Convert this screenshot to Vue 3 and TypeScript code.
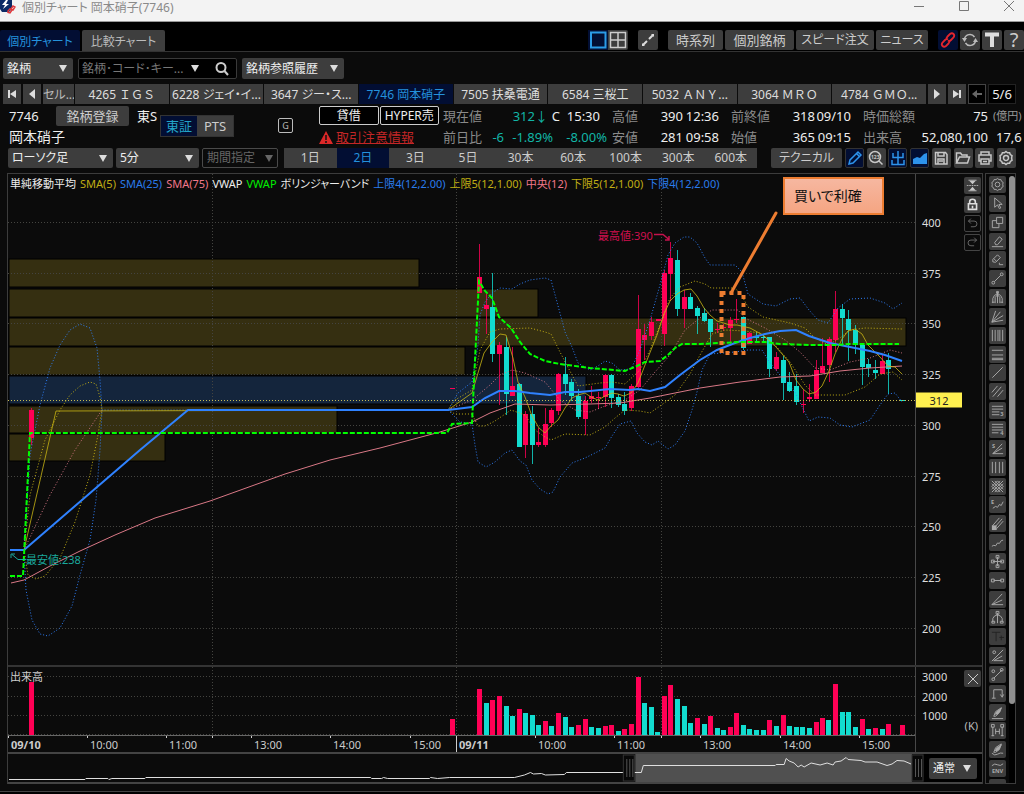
<script setup lang="ts">
import { ref } from 'vue'

type Candle = [x: number, high: number, top: number, bottom: number, low: number, up: number]
type Bar = [x: number, top: number, up: number]
interface Tool { name: string; d: string; fill?: string; text?: string; tx?: number; ty?: number; off?: boolean }

const plot = { x: 8, y: 174, w: 907, h: 491 }
const pctX = (x: number) => `${((x - plot.x) / plot.w) * 100}%`
const pctY = (y: number) => `${((y - plot.y) / plot.h) * 100}%`
const priceY = (p: number) => 222 + (400 - p) * 2.028
const volumeY = (v: number) => 735 - v * 0.0192
const volPct = (v: number) => `${((volumeY(v) - 667) / 68) * 100}%`

const watch = ['4265 ＩＧＳ', '6228 ジェイ・イ...', '3647 ジー・ス...', '7746 岡本硝子', '7505 扶桑電通', '6584 三桜工', '5032 ＡＮＹ...', '3064 ＭＲＯ', '4784 ＧＭＯ...']
const activeWatch = ref('7746 岡本硝子')
const periods = ['1日', '2日', '3日', '5日', '30本', '60本', '100本', '300本', '600本']
const period = ref('2日')
const query = ref('')

const legend = [
  ['単純移動平均', 'white'], ['SMA(5)', 'olive'], ['SMA(25)', 'blue'], ['SMA(75)', 'pink'], ['VWAP', 'white'], ['VWAP', 'green'],
  ['ボリンジャーバンド', 'white'], ['上限4(12,2.00)', 'blue'], ['上限5(12,1.00)', 'olive'], ['中央(12)', 'pink'], ['下限5(12,1.00)', 'olive'], ['下限4(12,2.00)', 'blue'],
]
const prices = [400, 375, 350, 325, 300, 275, 250, 225, 200]
const volumes = [3000, 2000, 1000]
const sessions = [212, 456, 661]
const times = [
  { x: 8, t: '09/10', day: true }, { x: 87, t: '10:00' }, { x: 166, t: '11:00' }, { x: 212, t: '' }, { x: 251, t: '13:00' }, { x: 330, t: '14:00' }, { x: 410, t: '15:00' },
  { x: 456, t: '09/11', day: true, line: true }, { x: 535, t: '10:00' }, { x: 614, t: '11:00' }, { x: 661, t: '' }, { x: 700, t: '13:00' }, { x: 780, t: '14:00' }, { x: 859, t: '15:00' },
]
const bands = [
  [259, 28, 419], [289, 28, 538], [318, 28, 906], [347, 28, 465], [376, 28, 586], [406, 27, 337], [434, 27, 165],
]

const candles: Candle[] = [
  [31, 408, 410, 438, 445, 1], [452, 388, 388, 389, 389, 1],
  [479, 244, 277, 293, 293, 1], [486, 294, 305, 309, 334, 1], [492, 273, 307, 354, 362, 0], [499, 342, 345, 354, 405, 1],
  [506, 337, 347, 394, 415, 0], [512, 347, 386, 396, 396, 1], [519, 383, 384, 447, 447, 0], [525, 411, 414, 445, 458, 1],
  [532, 406, 414, 445, 464, 0], [538, 428, 442, 445, 447, 1], [545, 408, 424, 445, 447, 1], [551, 408, 410, 423, 427, 1],
  [558, 373, 374, 411, 415, 1], [565, 357, 374, 384, 395, 0], [571, 379, 382, 396, 401, 0], [578, 389, 396, 417, 419, 0],
  [585, 396, 401, 419, 435, 1], [591, 386, 396, 399, 403, 1], [598, 392, 397, 398, 409, 1], [605, 374, 375, 397, 407, 1],
  [611, 374, 375, 398, 408, 0], [618, 394, 397, 405, 407, 0], [624, 392, 404, 411, 415, 0], [631, 384, 386, 408, 411, 1],
  [638, 295, 329, 387, 388, 1], [644, 324, 335, 340, 360, 1], [651, 317, 322, 336, 340, 1], [658, 319, 319, 321, 320, 1],
  [664, 270, 273, 334, 346, 1], [670, 242, 258, 274, 301, 1], [677, 250, 260, 309, 316, 0], [684, 290, 297, 309, 328, 1],
  [690, 293, 297, 309, 309, 0], [697, 306, 308, 316, 334, 0], [704, 308, 313, 321, 322, 0], [710, 319, 319, 332, 347, 0],
  [717, 323, 329, 330, 333, 1], [723, 324, 327, 328, 331, 1], [730, 317, 320, 328, 345, 1], [736, 299, 319, 320, 323, 1],
  [743, 317, 317, 348, 350, 0], [749, 332, 333, 344, 344, 1], [756, 332, 336, 338, 343, 0], [763, 335, 337, 338, 342, 0],
  [769, 337, 337, 369, 377, 0], [776, 352, 357, 369, 371, 1], [783, 356, 360, 383, 400, 0], [789, 372, 382, 391, 392, 0],
  [796, 374, 386, 402, 405, 0], [803, 390, 404, 405, 413, 1], [809, 384, 397, 399, 402, 1], [816, 360, 370, 399, 399, 1],
  [822, 338, 366, 373, 373, 1], [829, 337, 339, 365, 382, 1], [835, 291, 309, 340, 352, 1], [842, 304, 309, 318, 344, 0],
  [848, 310, 319, 330, 361, 0], [855, 325, 330, 345, 354, 0], [862, 344, 345, 367, 385, 0], [868, 359, 364, 368, 377, 0],
  [875, 360, 370, 373, 379, 0], [882, 354, 361, 374, 374, 1], [888, 353, 360, 369, 394, 0], [902, 400, 400, 401, 401, 0],
]

const volumeBars: Bar[] = [
  [31, 682, 1], [452, 719, 1], [479, 689, 1], [486, 703, 0], [492, 700, 1], [499, 696, 1], [506, 706, 0], [512, 716, 0], [519, 709, 1],
  [525, 713, 0], [532, 715, 0], [538, 725, 0], [545, 721, 1], [551, 726, 0], [558, 713, 1], [565, 717, 0], [571, 727, 0], [578, 725, 1],
  [585, 719, 1], [591, 727, 0], [598, 728, 0], [605, 726, 1], [611, 725, 1], [618, 731, 0], [624, 729, 1], [631, 724, 1], [638, 677, 1],
  [644, 703, 0], [651, 707, 0], [657, 732, 0], [664, 696, 1], [670, 685, 1], [677, 699, 0], [684, 706, 0], [690, 723, 0], [697, 718, 1],
  [704, 724, 0], [710, 716, 1], [717, 728, 0], [723, 730, 0], [730, 727, 1], [736, 713, 1], [743, 725, 0], [749, 729, 0], [756, 730, 0],
  [763, 730, 0], [769, 720, 1], [776, 726, 0], [783, 715, 1], [789, 726, 0], [796, 727, 0], [802, 727, 0], [809, 728, 0], [816, 722, 1],
  [822, 718, 1], [828, 720, 0], [835, 684, 1], [842, 712, 0], [848, 712, 0], [855, 727, 0], [862, 719, 1], [868, 729, 0], [875, 728, 1],
  [882, 729, 0], [888, 724, 1], [902, 725, 1],
]

const series = [
  { c: 'dot blue', p: '24,550 30,455 40,405 50,368 60,345 70,330 80,324 90,328 97,348 100,380 102,410 448,410 458,393 472,382 478,345 480,315 485,302 492,293 500,288 512,289 520,284 530,280 545,278 551,280 557,302 565,332 572,347 578,363 590,370 598,366 605,361 612,363 620,370 631,369 640,350 650,320 660,285 668,255 675,243 684,237 690,237 697,243 705,258 710,265 735,265 742,272 748,294 763,304 776,306 790,299 800,298 809,310 818,320 828,323 838,308 850,299 870,298 885,303 893,309 902,303' },
  { c: 'dot blue', p: '24,550 26,590 32,620 40,634 48,636 60,628 72,606 80,575 90,540 96,500 100,450 102,410' },
  { c: 'dot blue', p: '448,410 460,422 472,424 475,445 478,462 486,467 495,462 505,453 512,450 520,461 526,465 532,480 540,489 548,494 553,492 560,477 572,463 585,458 597,452 605,448 612,436 620,424 631,421 637,433 645,442 652,445 658,441 668,449 675,445 685,431 692,410 697,392 702,370 710,354 735,352 748,350 762,350 770,363 780,375 795,392 809,421 818,417 830,418 840,425 852,427 870,420 880,405 888,394 895,393 902,402' },
  { c: 'dot olive', p: '24,550 30,495 45,440 60,410 70,395 80,386 90,382 96,384 100,397 102,410' },
  { c: 'dot olive', p: '24,550 28,575 36,579 45,576 60,558 75,522 90,475 98,435 102,410' },
  { c: 'dot olive', p: '448,410 455,400 472,390 480,350 490,332 500,329 530,328 545,332 551,334 560,352 572,375 578,386 600,383 612,382 625,384 640,370 650,350 660,325 670,298 680,287 695,281 705,284 711,288 735,288 742,296 748,307 763,317 790,323 805,328 815,338 828,345 840,338 850,330 865,328 902,329' },
  { c: 'dot olive', p: '448,410 455,414 472,414 478,426 485,426 495,421 511,410 525,415 535,430 545,437 551,440 565,434 590,435 605,427 615,418 625,410 640,411 650,413 660,406 675,395 690,374 700,355 712,334 725,330 745,331 760,333 775,345 790,362 805,385 815,395 845,395 865,387 880,374 893,372 902,380' },
  { c: 'dot pink', p: '24,550 50,495 75,450 102,410' },
  { c: 'dot pink', p: '448,410 472,400 490,385 500,375 512,370 525,373 545,382 560,400 575,410 590,412 605,406 625,400 640,390 655,372 670,355 685,330 700,318 712,310 738,310 745,318 765,328 785,340 800,352 815,368 830,370 850,362 870,358 890,350 902,353' },
  { c: 'thin pink', p: '11,583 24,580 50,566 80,551 115,535 155,518 210,501 260,483 285,474 330,460 380,448 440,432 472,422 490,413 515,404 550,405 590,404 620,403 650,398 665,395 700,388 740,382 780,377 810,376 840,371 870,368 902,366' },
  { c: 'thin olive', p: '24,550 56,411 448,410 472,393 478,373 484,353 492,342 500,334 506,335 513,358 518,382 525,397 532,416 539,428 545,433 551,426 558,420 565,408 572,398 578,395 585,393 591,397 598,400 605,396 612,393 618,394 624,396 631,393 638,383 645,365 651,350 657,335 664,314 670,301 677,294 684,290 691,289 697,296 704,308 710,315 717,321 730,325 737,325 750,328 763,335 776,347 789,362 796,380 803,389 809,394 816,392 822,386 829,371 835,354 842,339 848,331 855,329 862,334 868,345 880,357 888,366 895,367 902,374' },
  { c: 'bold blue', p: '10,550 24,550 140,450 188,410 448,410 472,407 485,398 499,391 515,391 530,393 550,395 565,392 580,392 610,389 630,390 638,389 650,391 665,387 680,375 700,360 717,350 735,343 750,338 765,334 780,331 796,330 809,336 830,343 850,347 870,351 885,355 902,361' },
  { c: 'dash green', p: '10,576 23,576 30,433 447,433 452,424 472,423 475,360 479,281 485,291 492,298 499,317 511,328 520,342 530,354 545,361 560,364 590,368 625,371 637,366 645,362 660,361 668,355 675,348 682,344 700,344 740,342 765,342 780,344 810,345 835,345 850,344 899,344' },
]

const gear = 'M8 1.5l1.6 1.3 2-.1.7 1.9 1.7 1.1L13.600 8l.4 2.300-1.700 1.100-.7 1.900-2-.1L8 14.500l-1.600-1.300-2 .1-.7-1.900L2 10.300 2.400 8 2 5.700l1.700-1.100.7-1.900 2 .1zM8 5.500a2.500 2.500 0 1 0 0 5 2.500 2.500 0 1 0 0-5z'
const tools: Tool[] = [
  { name: '設定', d: gear },
  { name: '選択', d: 'M5 2v10l3-2.500 2 4 1.500-.8-2-3.700H13z' },
  { name: '複製', d: 'M7 2.500h6.500V9H7zM7 6H2.500v7.500h7V9' },
  { name: '消去', d: 'M2 13.500h12M5 9l5-6 3 2.500-5 6H6z' },
  { name: '全消去', d: 'M3 8l5-5 3 3-5 5-3-.5zM4 7l3 3M10 13.500h4M10 11.500v2' },
  { name: '線分', d: 'M4.500 11.500l7-7M2 12.500a1.500 1.500 0 1 0 3 0 1.500 1.500 0 1 0-3 0M11 3.500a1.500 1.500 0 1 0 3 0 1.500 1.500 0 1 0-3 0' },
  { name: 'ピッチフォーク', d: 'M8 2v12M3 14V9q1-4 5-5 4 1 5 5v5M5.500 14V8L8 5l2.500 3v6M2 13h3M11 13h3M7 1.500h2v2H7z' },
  { name: 'ファン', d: 'M2 14L6 2M2 14L11 3M2 14l12-7M2 14l12-2' },
  { name: '縦線', d: 'M2.500 2v12M5.500 2v12M8.500 2v12M10.500 2v12M13.500 2v12' },
  { name: '横線', d: 'M2 3.500h12M2 8.500h12M2 12h12M2 13.500h12' },
  { name: '直線', d: 'M2.500 13.500l11-11' },
  { name: '平行線', d: 'M2 9l6-7M3 13.500L12 3M8 13.500l6-7' },
  { name: '三分割', d: 'M2 3.500h12M2 6.500h12M2 9.500h8M2 12.500h8', text: '3', tx: 11, ty: 14 },
  { name: '四分割', d: 'M2 2.500h12M2 5.500h12M2 8.500h12M2 11.500h7', text: '4', tx: 11, ty: 14 },
  { name: 'スピードライン', d: 'M3 13.500L13 3M3 13.500l10-6M3 13.500h11', text: 'S', tx: 2, ty: 7 },
  { name: '等間隔線', d: 'M2.500 2v12M6 2v12M10 2v12M13.500 2v12' },
  { name: 'メッシュ', d: 'M2 8l6 6M2 8l6-6M2 2l12 12M14 2L2 14M8 2l6 6M8 14l6-6M5 2l9 9M2 5l9 9M11 2L2 11M14 5l-9 9' },
  { name: '波動', d: 'M3 12l3-2 2 1 2-3 2 1 2-4', text: 'E', tx: 1, ty: 7 },
  { name: 'チャネル', d: 'M3 10l7-8M5 12l8-9M7 13.500l7-8M3 10v4h4', fill: 'M2 10h5v5H2z' },
  { name: 'フリーライン', d: 'M2 12l2-1 2 .5 2-3 2 .5 2-3 2-.5' },
  { name: '移動', d: 'M8 3v10M3 8h10M6.500 1.500h3v3h-3zM6.500 11.500h3v3h-3zM1.500 6.500h3v3h-3zM11.500 6.500h3v3h-3z' },
  { name: '水平線分', d: 'M4 8h8M1.500 6.500h3v3h-3zM11.500 6.500h3v3h-3z' },
  { name: '角度線', d: 'M2 13.500h12M2 13.500L13 2M2 13.500l11-5' },
  { name: 'サイクル', d: 'M8 3v11M3 13V9q1-3 5-4 4 1 5 4v4M6.500 1.500h3v3h-3zM2 12h3v2H2zM11 12h3v2h-3z' },
  { name: '文字', d: 'M2 3.500h9M6.500 3.500V13M10 9h5M12 7v5', off: true },
  { name: 'パーセント', d: 'M2 14L14 2M4 13.500l9-5M4 13.500h10M3 4.500a1.500 1.500 0 1 0 3 0 1.500 1.500 0 1 0-3 0' },
  { name: '比率線', d: 'M4 12L13 3M2 4.500a1.500 1.500 0 1 0 3 0 1.500 1.500 0 1 0-3 0M11 3a1.500 1.500 0 1 0 3 0 1.500 1.500 0 1 0-3 0M2 13a1.500 1.500 0 1 0 3 0 1.500 1.500 0 1 0-3 0' },
  { name: '値幅', d: 'M4 13V4h9v7M2 13h4M11 9l2 3 1.500-3' },
  { name: 'ペン', d: 'M2 14.500h12M4 12l2-5 6-4-2 5-4 4z', fill: 'M5 10l2-3 6-5-2 5-3 3z' },
  { name: '期間幅', d: 'M3 4v10M13 4v10M6 6v6M10 6v6M6 9h4M1.500 1.500h3v3h-3zM11.500 1.500h3v3h-3zM1.500 13.500h3M11.500 13.500h3' },
  { name: 'ブラシ', d: 'M2 12q3 3 6 1t6-1M4 11l2-5 6-4-2 6-4 3z', fill: 'M5 9l2-3 6-4-3 6-3 2z' },
  { name: 'エンベロープ', d: 'M2 5q3-3 6-1t6-1', text: 'ENV', tx: 2, ty: 13 },
]

const chartTools: (Tool & { on?: boolean })[] = [
  { name: '描画', d: 'M2 14l1-4 8-8 3 3-8 8zM10 4l2 2', on: true },
  { name: '数値拡大', d: 'M7 1.500a5.500 5.500 0 1 0 0 11 5.500 5.500 0 1 0 0-11zM11 11l3.500 3.500', text: '123', tx: 3, ty: 9 },
  { name: '出来高表示', d: 'M8 1v13M3 3v4.500h10V3M2 10v4.500h12V10', on: true },
  { name: '面表示', d: '', fill: 'M1 14V9l4-2 3 1 4-4 3-1v11z', on: true },
  { name: '保存', d: 'M2.500 2.500h10l1.500 2v9.500H2.500zM5 2.500V6h6V2.500M5 14V9h6v5M6 11h4' },
  { name: '開く', d: 'M1.500 13V3h4l1.500 2h5v2M1.500 13l3-6h10l-2 6z' },
  { name: '印刷', d: 'M4 5V2h8v3M4 11H2V5h12v6h-2M4 9h8v5H4zM6 11.500h4' },
  { name: '表示設定', d: gear },
]
</script>

<template>
  <div class="app">
    <header class="titlebar">
      <svg class="appicon" viewBox="0 0 16 14" aria-hidden="true">
        <path d="M0 0h12v9l-3 3H2L0 9z" fill="#0c2a66" /><path d="M6 0L2 5h3L3 9l6-5H6l2-4z" fill="#fff" />
        <path d="M8 11l2-2 2 1-2 3-2-.5zM11 9l2-3 2 1-2 3z" fill="none" stroke="#e0393c" stroke-width="1.500" />
      </svg>
      <h1>個別チャート 岡本硝子(7746)</h1>
      <div class="winbtns">
        <button aria-label="最小化"><svg viewBox="0 0 12 12"><path d="M1 6.500h10" /></svg></button>
        <button aria-label="最大化"><svg viewBox="0 0 12 12"><path d="M1.500 1.500h9v9h-9z" /></svg></button>
        <button aria-label="閉じる"><svg viewBox="0 0 12 12"><path d="M1 1l10 10M11 1L1 11" /></svg></button>
      </div>
    </header>

    <nav class="tabs">
      <button class="tab on">個別チャート</button>
      <button class="tab">比較チャート</button>
      <div class="topbtns">
        <div class="pair">
          <button class="on" aria-label="一画面"><svg viewBox="0 0 20 20"><path d="M3 2.500h14.500v15H3z" stroke="#2b9be8" stroke-width="2" /></svg></button>
          <button aria-label="四画面"><svg viewBox="0 0 20 20"><path d="M2.500 2.500h15v15h-15zM10 2.500v15M2.500 10h15" stroke="#ccc" stroke-width="1.500" /></svg></button>
        </div>
        <button class="btn sq apart" aria-label="縮小"><svg viewBox="0 0 20 20"><path d="M5 15l4-4M11 9l4-4" stroke="#ddd" stroke-width="2" /><path d="M4 13v3h3zM13 4h3v3z" fill="#ddd" /></svg></button>
        <button class="btn w55">時系列</button>
        <button class="btn w69">個別銘柄</button>
        <button class="btn w78">スピード注文</button>
        <button class="btn w52 apart">ニュース</button>
        <button class="btn sq navy" aria-label="連動"><svg viewBox="0 0 20 20"><path d="M9 9.500q-1-1.500.5-3l2.500-2.500q2-1.500 3.500 0t0 3.500L13 10q-1.500 1.500-3 .5M11 10.500q1 1.500-.5 3L8 16q-2 1.500-3.500 0t0-3.500L7 10q1.500-1.500 3-.5" stroke="#e3262e" stroke-width="1.800" /></svg></button>
        <button class="btn sq" aria-label="更新"><svg viewBox="0 0 20 20"><path d="M4.500 9a5.500 5.500 0 0 1 10-2M15.500 11a5.500 5.500 0 0 1-10 2" stroke="#bbb" stroke-width="1.500" /><path d="M2 8h5l-2.500 4zM13 12h5l-2.500-4z" fill="#bbb" /></svg></button>
        <button class="btn sq" aria-label="文字サイズ"><svg viewBox="0 0 20 20"><path d="M3 4.500h14M10 4v13" stroke="#ddd" stroke-width="4" /></svg></button>
        <button class="btn sq q" aria-label="ヘルプ">?</button>
      </div>
    </nav>

    <div class="search">
      <label class="sel w70"><select aria-label="検索対象"><option>銘柄</option></select></label>
      <div class="find">
        <input v-model="query" type="text" placeholder="銘柄･コード･キー..." aria-label="銘柄・コード・キーワード">
        <i class="tri"></i>
        <button aria-label="検索"><svg viewBox="0 0 14 14"><circle cx="6" cy="5.500" r="4.500" /><path d="M9.500 9L13 13" /></svg></button>
      </div>
      <label class="sel w101"><select aria-label="銘柄参照履歴"><option>銘柄参照履歴</option></select></label>
    </div>

    <div class="watch">
      <button class="step" aria-label="先頭"><svg viewBox="0 0 10 10"><path d="M1 1h2v8H1zM9 1v8L3 5z" /></svg></button>
      <button class="step" aria-label="前へ"><svg viewBox="0 0 10 10"><path d="M8 0v10L2 5z" /></svg></button>
      <div class="cells">
        <button class="cell cut">セル...</button>
        <button v-for="w in watch" :key="w" class="cell" :class="{ on: w === activeWatch, full: /[Ａ-Ｚ]/.test(w) }" @click="activeWatch = w">{{ w }}</button>
      </div>
      <button class="step" aria-label="次へ"><svg viewBox="0 0 10 10"><path d="M2 0v10l6-5z" /></svg></button>
      <button class="step" aria-label="末尾"><svg viewBox="0 0 10 10"><path d="M7 1h2v8H7zM1 1v8l6-4z" /></svg></button>
      <button class="step ghost" aria-label="戻る"><svg viewBox="0 0 10 10"><path d="M5 1v3h5v2H5v3L0 5z" /></svg></button>
      <span class="pageno">5/6</span>
    </div>

    <section class="info">
      <div class="ident">
        <div class="code"><span>7746</span><button class="btn reg">銘柄登録</button><span>東S</span></div>
        <div class="name">岡本硝子</div>
      </div>
      <div class="market"><button class="on">東証</button><button>PTS</button></div>
      <span class="gbox">G</span>
      <div class="flags">
        <div class="boxes"><span>貸借</span><span>HYPER売</span></div>
        <a href="#notice"><svg viewBox="0 0 14 13"><path d="M7 0l7 13H0z" fill="#dc2828" /><path d="M7 4v5M7 10v2" stroke="#111" stroke-width="1.500" /></svg><b>取引注意情報</b></a>
      </div>
      <dl class="quote g1">
        <div><dt>現在値</dt><dd class="teal a">312</dd><dd class="teal b">↓</dd><dd class="c">C</dd><dd class="d">15:30</dd></div>
        <div><dt>前日比</dt><dd class="teal e">-6</dd><dd class="teal f">-1.89%</dd><dd class="teal h">-8.00%</dd></div>
      </dl>
      <dl class="quote g2">
        <div><dt>高値</dt><dd>390</dd><dd class="t">12:36</dd></div>
        <div><dt>安値</dt><dd>281</dd><dd class="t">09:58</dd></div>
      </dl>
      <dl class="quote g3">
        <div><dt>前終値</dt><dd>318</dd><dd class="t">09/10</dd></div>
        <div><dt>始値</dt><dd>365</dd><dd class="t">09:15</dd></div>
      </dl>
      <dl class="quote g4">
        <div><dt>時価総額</dt><dd>75</dd><dd class="unit">(億円)</dd></div>
        <div><dt>出来高</dt><dd>52,080,100</dd><dd class="more">17,6</dd></div>
      </dl>
    </section>

    <div class="period">
      <label class="sel w105"><select aria-label="チャート種別"><option>ローソク足</option></select></label>
      <label class="sel w83"><select aria-label="足"><option>5分</option></select></label>
      <label class="sel w75 off"><select aria-label="期間" disabled><option>期間指定</option></select></label>
      <div class="seg"><button v-for="p in periods" :key="p" :class="{ on: p === period }" @click="period = p">{{ p }}</button></div>
      <button class="btn tech">テクニカル</button>
      <div class="ctools">
        <button v-for="t in chartTools" :key="t.name" :class="{ on: t.on }" :aria-label="t.name">
          <svg viewBox="0 0 16 16"><path :d="t.d" class="ln" /><path v-if="t.fill" :d="t.fill" class="fl" /><text v-if="t.text" :x="t.tx" :y="t.ty">{{ t.text }}</text></svg>
        </button>
      </div>
    </div>

    <main class="work">
      <section class="panel">
        <div class="main">
          <div class="plot">
            <svg class="fillbox" viewBox="8 174 907 491" preserveAspectRatio="none" aria-label="価格チャート">
              <rect v-for="(b, i) in bands" :key="i" x="9" :y="b[0]" :width="b[2] - 9" :height="b[1]" :fill="i === 4 ? '#14253c' : '#352f11'" stroke="#000" />
              <g class="grid">
                <path v-for="p in prices" :key="p" :d="`M8 ${Math.round(priceY(p)) + 0.5}H915`" />
                <path v-for="s in sessions" :key="s" :d="`M${s + 0.5} 174V665`" />
              </g>
              <g v-for="c in candles" :key="c[0]" :class="c[5] ? 'up' : 'down'">
                <rect :x="c[0]" :y="c[1]" width="1" :height="Math.max(1, c[4] - c[1])" class="wick" />
                <rect :x="c[0] - 2" :y="c[2]" width="5" :height="c[3] - c[2]" />
              </g>
              <polyline v-for="(s, i) in series" :key="i" :points="s.p" :class="s.c" />
              <path d="M8 400.500H915" class="now" />
              <path d="M654 234.500h9l6 5M669 236v4h-4" fill="none" stroke="#c4124c" stroke-width="1.500" />
              <path d="M26 559.500h-8l-6-5M11 558v-4h4" fill="none" stroke="#1aa89c" />
              <path d="M776 213L731 293" fill="none" stroke="#ed7d31" stroke-width="3" stroke-linecap="round" />
              <rect x="721.500" y="293" width="22" height="60" fill="none" stroke="#ed7d31" stroke-width="4" stroke-dasharray="4 4" />
            </svg>
            <div class="legend"><span v-for="(l, i) in legend" :key="i" :class="l[1]">{{ l[0] }}</span></div>
            <span class="mark hi" :style="{ left: pctX(598), top: pctY(236) }">最高値:390</span>
            <span class="mark lo" :style="{ left: pctX(26), top: pctY(560) }">最安値:238</span>
            <div class="callout" :style="{ left: pctX(783), top: pctY(177) }">買いで利確</div>
          </div>
          <div class="axis">
            <span v-for="p in prices" :key="p" class="lab" :style="{ top: pctY(priceY(p) + 1) }">{{ p }}</span>
            <span class="nowtag" :style="{ top: pctY(400) }">312</span>
            <div class="side4">
              <button aria-label="縦縮小"><svg viewBox="0 0 16 16"><path d="M3 1.500h10M3 14.500h10" class="ln" /><path d="M1 8h14" class="ln" stroke-dasharray="2 1" /><path d="M4 2h8L8 6.500zM4 14h8L8 9.500z" class="fl" /></svg></button>
              <button aria-label="固定"><svg viewBox="0 0 16 16"><path d="M4.500 7V4.500q0-3 3.500-3t3.500 3V7M3 7h10v7H3zM8 9.500v3" stroke-width="2" class="lock" /></svg></button>
              <button class="dim" aria-label="元に戻す"><svg viewBox="0 0 16 16"><path d="M3 5h7q3.500 0 3.500 3.500T10 12H6M6 2L3 5l3 3" class="ln" /></svg></button>
              <button class="dim" aria-label="やり直し"><svg viewBox="0 0 16 16"><path d="M13 5H6Q2.500 5 2.500 8.500T6 12h4M10 2l3 3-3 3" class="ln" /></svg></button>
            </div>
          </div>
        </div>

        <div class="vol">
          <div class="plot">
            <svg class="fillbox" viewBox="8 667 907 68" preserveAspectRatio="none" aria-label="出来高">
              <g class="grid">
                <path v-for="v in volumes" :key="v" :d="`M8 ${Math.round(volumeY(v)) - 0.5}H915`" /><path d="M8 734.500H915" />
                <path v-for="s in sessions" :key="s" :d="`M${s + 0.5} 667V735`" />
              </g>
              <rect v-for="b in volumeBars" :key="b[0]" :x="b[0] - 2" :y="b[1]" width="5" :height="735 - b[1]" :fill="b[2] ? '#ff0055' : '#12dccf'" />
            </svg>
            <span class="vtitle">出来高</span>
          </div>
          <div class="axis">
            <span v-for="v in volumes" :key="v" class="lab" :style="{ top: volPct(v) }">{{ v }}</span>
            <button class="vclose" aria-label="出来高を閉じる"><svg viewBox="0 0 16 16"><path d="M3 3l10 10M13 3L3 13" class="ln" /></svg></button>
            <span class="unitk">(K)</span>
          </div>
        </div>

        <div class="time">
          <div class="plot">
            <span v-for="(t, i) in times" :key="i" class="tick" :class="{ day: t.day, line: t.line }" :style="{ left: pctX(t.x) }">{{ t.t }}</span>
          </div>
          <div class="axis"></div>
        </div>

        <div class="navi">
          <svg viewBox="8 754 917 28" preserveAspectRatio="none" aria-label="表示範囲">
            <rect x="636" y="754" width="277" height="28" fill="#505050" />
            <polyline fill="none" stroke="#e0e0e0" points="9,779.500 85,779.500 86,778.500 108,778.500 109,779.500 112,778.500 145,778.500 146,777.500 371,777.500 372,778.500 382,778.500 384,777.500 388,778.500 430,778.500 431,777.500 438,778.500 450,777.500 515,777.500 525,775 531,772.500 534,774 542,773.500 546,775 565,774.500 567,772.500 642,772.500 644,765.500 776,765.500 777,764.500 785,764.500 787,758.500 790,761 795,763 799,767 802,765 805,767 812,763 821,765 828,763 834,765 836,762 842,761 847,757.500 849,759.500 862,760.500 866,762 878,762 888,765.500 893,764 898,760.500 905,761 912,764" />
            <g><rect x="624" y="755" width="11" height="26" /><rect x="913" y="755" width="11" height="26" /><path d="M627.500 759v18M630.500 759v18M633.500 759v18M916.500 759v18M919.500 759v18M922.500 759v18" /></g>
          </svg>
          <label class="sel mode"><select aria-label="表示モード"><option>通常</option></select></label>
        </div>
      </section>

      <aside class="dock">
        <div class="list">
          <button v-for="t in tools" :key="t.name" :aria-label="t.name" :disabled="t.off">
            <svg viewBox="0 0 16 16"><path :d="t.d" class="ln" /><path v-if="t.fill" :d="t.fill" class="fl" /><text v-if="t.text" :x="t.tx" :y="t.ty">{{ t.text }}</text></svg>
          </button>
          <i></i>
        </div>
        <div class="scroll"><i></i></div>
      </aside>
    </main>
  </div>
</template>

<style>
html, body { background: #000; }
</style>

<style scoped>
* { box-sizing: border-box; }
.app { height: 100vh; min-height: 600px; display: flex; flex-direction: column; background: #0b0b0b; border-bottom: 2px solid #000; box-shadow: inset 0 -1px #444; color: #eee; font: 13px/18px "Noto Sans", "Noto Sans CJK JP", sans-serif; font-feature-settings: "palt"; overflow: hidden; white-space: nowrap; }
button, select, input { font: inherit; font-feature-settings: inherit; color: inherit; margin: 0; padding: 0; border: 0; background: none; min-width: 0; }
svg { display: block; fill: none; }
h1, dl, dd, dt { margin: 0; font: inherit; }

.titlebar { flex: none; height: 22px; background: #f3f3f3; border-bottom: 1px solid #999; display: flex; align-items: flex-start; color: #8a8a8a; }
.appicon { width: 16px; height: 14px; margin-right: 6px; }
h1 { font-size: 12px; line-height: 16px; }
.winbtns { margin-left: auto; display: flex; gap: 33px; padding-right: 9px; }
.winbtns svg { width: 12px; height: 12px; stroke: #777; }

.tabs { flex: none; height: 30px; padding-top: 8px; background: #000; border-bottom: 1px solid #333; display: flex; gap: 2px; }
.tab { width: 83px; background: #3e3e3e; color: #bbb; border-radius: 2px 2px 0 0; font-size: 12px; line-height: 24px; }
.tab.on { width: 80px; background: #020e33; color: #2492dd; }
.topbtns { margin-left: auto; display: flex; gap: 2px; }
.btn, .pair { height: 20px; background: #3d3d3d; color: #ccc; border-radius: 2px; }
.btn { font-size: 13px; line-height: 20px; display: block; }
.pair { display: flex; margin-right: 8px; }
.pair button, .sq { width: 20px; }
.pair svg, .sq svg { width: 20px; height: 20px; }
.pair .on, .navy { background: #020e33; }
.apart { margin-right: 8px; }
.q { font-size: 20px; }
.w55 { width: 55px; } .w69 { width: 69px; } .w78 { width: 78px; } .w52 { width: 52px; }
.w78, .w52 { font-size: 12px; }

.sel { display: grid; align-items: center; background: #3d3d3d; border-radius: 2px; height: 21px; flex: none; }
.sel select, .sel::after { grid-area: 1 / 1; }
.sel select { appearance: none; width: 100%; height: 100%; padding-left: 4px; color: #eee; opacity: 1; }
.sel::after, .tri { content: ""; justify-self: end; margin-right: 6px; border: 4px solid transparent; border-top: 7px solid #ddd; border-bottom: 0; pointer-events: none; }
.sel.off { background: #0b0b0b; border: 1px solid #4a4a4a; }
.sel.off select { color: #666; } .sel.off::after { border-top-color: #666; margin-right: 4px; }
.w70 { width: 70px; } .w101 { width: 102px; } .w105 { width: 105px; } .w83 { width: 83px; } .w75 { width: 76px; }
.search { flex: none; height: 32px; padding: 6px 3px 4px; display: flex; gap: 5px; font-size: 12px; }
.find { width: 159px; height: 21px; background: #000; border: 1px solid #3a3a3a; border-radius: 2px; display: flex; align-items: center; padding: 0 7px 0 3px; }
.find input { flex: 1; height: 100%; outline: 0; }
.find input::placeholder { color: #777; opacity: 1; }
.find .tri { margin-right: 16px; }
.find svg { width: 14px; height: 14px; stroke: #ccc; stroke-width: 2; }

.watch { flex: none; height: 20px; padding: 0 8px 0 3px; display: flex; gap: 2px; }
.step { flex: none; width: 18px; background: #3d3d3d; display: grid; place-items: center; }
.step svg { width: 10px; height: 10px; fill: #ddd; }
.ghost { background: #000; border: 1px solid #444; } .ghost svg { fill: #666; }
.cells { flex: 1; min-width: 0; display: flex; gap: 1px; }
.cell { flex: 1; background: #3d3d3d; color: #ddd; font-size: 12px; line-height: 21px; overflow: hidden; }
.cell.cut { flex: none; width: 31px; direction: rtl; unicode-bidi: plaintext; color: #bbb; }
.cell.full { font-feature-settings: normal; }
.cell.on { background: #020e33; color: #2492dd; }
.pageno { width: 28px; border: 1px solid #222; background: #000; text-align: center; }

.info { flex: none; height: 44px; display: flex; padding: 1px 0 0 9px; overflow: hidden; }
.ident { width: 151px; flex: none; }
.code { display: flex; height: 22px; align-items: center; line-height: 20px; }
.code span:first-child { width: 47px; }
.reg { width: 73px; margin-right: 8px; line-height: 18px; }
.name { line-height: 20px; font-size: 14px; }
.market { flex: none; width: 74px; height: 22px; margin-top: 10px; display: flex; background: #3d3d3d; color: #ccc; border: 1px solid #333; }
.market button { flex: 1; line-height: 20px; } .market .on { background: #020e33; color: #22a4c8; }
.gbox { flex: none; width: 15px; height: 15px; margin: 13px 26px 0 44px; border: 1px solid #bbb; border-radius: 2px; font-size: 9px; line-height: 13px; text-align: center; color: #bbb; }
.flags { flex: none; width: 120px; margin-right: 4px; }
.boxes { display: flex; gap: 1px; padding-top: 1px; }
.boxes span { flex: 1; height: 19px; line-height: 17px; border: 1px solid #ccc; border-radius: 2px; text-align: center; background: #000; font-size: 12px; }
.flags a { display: flex; gap: 3px; align-items: center; color: #c22626; text-decoration: none; height: 24px; line-height: 16px; }
.flags a b { font-weight: 400; text-decoration: underline; }
.flags a svg { width: 14px; height: 13px; }
.quote { flex: none; }
.quote div { display: flex; height: 21px; line-height: 22px; }
.quote dt { color: #8a8a8a; } .quote dd { text-align: right; }
.teal { color: #12b5a6; }
.g1 { width: 169px; } .g1 dt { width: 38px; }
.a { width: 54px; } .b { width: 12px; } .c { width: 13px; } .d { width: 40px; }
.e { width: 23px; } .f { width: 49px; } .h { width: 54px; }
.g2 { width: 119px; } .g2 dt { width: 42px; } .g2 dd { width: 29px; } .g2 .t, .g3 .t { width: 36px; }
.g3 { width: 132px; } .g3 dt { width: 45px; } .g3 dd { width: 39px; }
.g4 dt { width: 54px; } .g4 dd { width: 71px; } .g4 .unit, .g4 .more { width: auto; padding-left: 5px; } .g4 .more { padding-left: 8px; } .g4 .unit { color: #999; font-size: 11px; }

.period { flex: none; height: 25px; padding: 0 8px 5px 8px; display: flex; gap: 3px; font-size: 12px; }
.period .sel, .tech { height: 20px; }
.seg { flex: 1; margin: 0 11px 0 3px; display: flex; background: #3d3d3d; height: 20px; }
.seg button { flex: 1; color: #ccc; } .seg .on { background: #020e33; color: #2492dd; }
.tech { width: 71px; flex: none; font-size: 12px; }
.ctools { flex: none; width: 171px; display: flex; justify-content: space-between; }
.ctools button, .side4 button, .vclose, .list button { background: #3d3d3d; border-radius: 2px; display: grid; place-items: center; }
.ctools button { width: 19px; height: 20px; }
.ctools .on { background: #020e33; border: 1px solid #333; color: #2d93ec; }
.ctools svg, .side4 svg, .list svg, .vclose svg { width: 16px; height: 16px; color: #c8c8c8; }
.ctools .on svg { color: #2d93ec; }
.ctools .ln { stroke-width: 1.5; }
.ln { stroke: currentColor; } .fl { fill: currentColor; }
.ctools text, .list text { fill: currentColor; font-size: 6px; font-weight: 700; }
.ctools text { font-size: 5px; }

.work { flex: 1; min-height: 0; display: flex; gap: 2px; padding: 0 8px 8px 7px; }
.panel { flex: 1; min-width: 0; display: flex; flex-direction: column; border: 1px solid #3c3c3c; border-bottom: 0; }
.main, .vol, .time { display: flex; }
.main { flex: 1; min-height: 0; border-bottom: 2px solid #343434; }
.main, .vol { box-sizing: content-box; }
.vol { flex: none; height: 68px; }
.plot { flex: 1; min-width: 0; position: relative; }
.axis { flex: none; width: 67px; border-left: 1px solid #484848; position: relative; }
.fillbox { position: absolute; width: 100%; height: 100%; }
.grid { stroke: #444440; stroke-dasharray: 1 2; }
.up { fill: #ff0055; } .down { fill: #12dccf; }
.wick { opacity: .8; }
.dot { stroke-dasharray: 1 2; } .thin { stroke-width: 1; } .bold, .dash { stroke-width: 2; } .dash { stroke-dasharray: 5 2; }
.dot { opacity: .95; } .thin.olive { opacity: .8; }
.now { stroke: #c8bc50; stroke-dasharray: 1 2; }
polyline.blue { stroke: #2f82ff; } polyline.olive { stroke: #c8b414; } polyline.pink { stroke: #d97886; } polyline.green { stroke: #0f0; }
.legend { position: absolute; left: 2px; top: 2px; display: flex; gap: 4px; font-size: 11px; line-height: 16px; }
.legend .blue { color: #2a7bea; } .legend .olive { color: #c0ae14; } .legend .pink { color: #f0788a; } .legend .green { color: #0e0; }
.mark { position: absolute; transform: translateY(-50%); font-size: 11px; line-height: 14px; }
.hi { color: #d0104f; } .lo { color: #1aa89c; }
.callout { position: absolute; width: 101px; height: 38px; border: 2px solid #ed7d31; background: linear-gradient(#f6b7a0, #f5a582); color: #111; padding-left: 9px; line-height: 33px; font-size: 14px; }
.lab { position: absolute; left: 6px; transform: translateY(-50%); font-size: 11px; line-height: 14px; color: #ddd; }
.nowtag { position: absolute; left: 0; width: 46px; transform: translateY(-50%); background: #fff04f; color: #222; font-size: 11px; line-height: 15px; text-align: center; }
.side4 { position: absolute; right: 1px; top: 3px; display: grid; gap: 2px; }
.side4 button, .vclose { width: 17px; height: 17px; }
.side4 .dim { background: #0b0b0b; border: 1px solid #444; } .side4 .dim svg { color: #777; }
.side4 svg { width: 13px; height: 13px; }
.lock { stroke: #ddd; }
.vclose { position: absolute; right: 1px; top: 3px; }
.vtitle { position: absolute; left: 2px; top: 2px; font-size: 11px; line-height: 16px; color: #ccc; }
.unitk { position: absolute; right: 4px; bottom: 1px; font-size: 11px; line-height: 16px; color: #bbb; }
.time { flex: none; height: 17px; }
.time .plot { border-top: 1px solid #666; overflow: hidden; }
.tick { position: absolute; top: 0; height: 17px; padding-left: 3px; font-size: 11px; line-height: 17px; color: #ccc; }
.tick::before { content: ""; position: absolute; left: 0; top: 0; width: 1px; height: 2px; background: #ccc; }
.tick.line::before { height: 17px; }
.tick.day { font-weight: 700; }
.navi { flex: none; display: flex; height: 32px; background: #000; border: solid #444; border-width: 2px 0; align-items: center; }
.navi svg { flex: 1; min-width: 0; height: 28px; background: #0b0b0b; }
.navi g rect { fill: #080808; stroke: #333; } .navi g path { stroke: #555; }
.mode { width: 48px; margin: 0 5px 0 5px; font-size: 11px; }

.dock { flex: none; width: 31px; border: 1px solid #3c3c3c; display: flex; padding: 2px 0 0 3px; gap: 3px; background: #080808; overflow: hidden; }
.list { width: 17px; display: flex; flex-direction: column; justify-content: space-between; }
.list button { width: 17px; height: 17px; }
.list button svg { color: #aaa; width: 15px; height: 15px; }
.list button:disabled svg { color: #222; }
.list i { height: 4px; background: #3d3d3d; border-radius: 2px 2px 0 0; }
.scroll { width: 6px; background: #000; }
.scroll i { display: block; height: 87%; background: #909090; border-radius: 3px; }
</style>
